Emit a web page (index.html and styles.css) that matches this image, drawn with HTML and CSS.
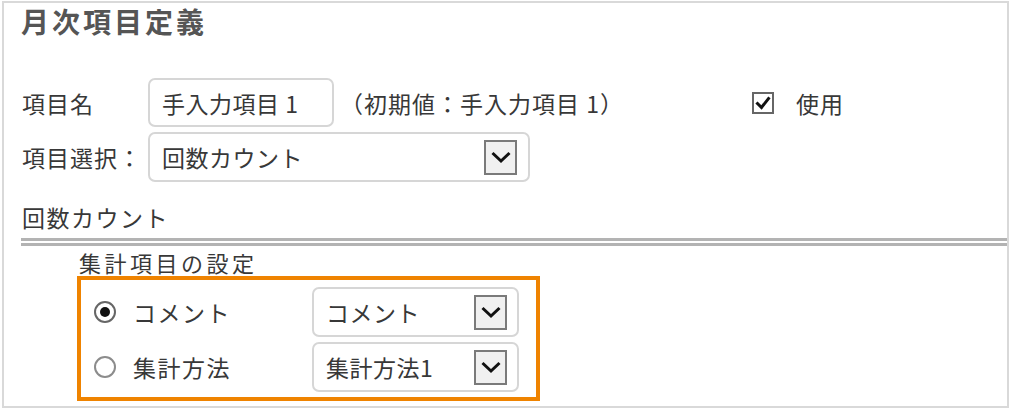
FILE: index.html
```html
<!DOCTYPE html>
<html lang="ja">
<head>
<meta charset="utf-8">
<title>月次項目定義</title>
<link rel="stylesheet" href="styles.css">
</head>
<body>
<div class="frame">
  <h1 class="title">月次項目定義</h1>
  <div class="row row-name">
    <span class="label">項目名</span>
    <div class="textbox">手入力項目 1</div>
    <span class="hint">（初期値：手入力項目 1）</span>
    <div class="use">
      <span class="checkbox"><svg width="18" height="18" viewBox="0 0 18 18"><path d="M3.5 9.5 L7.5 13.5 L14.5 4.5" fill="none" stroke="#111" stroke-width="3" stroke-linecap="square"/></svg></span>
      <span class="use-text">使用</span>
    </div>
  </div>
  <div class="row row-select">
    <span class="label">項目選択：</span>
    <div class="select select-wide">
      <span class="select-text">回数カウント</span>
      <span class="arrow"><svg width="22" height="16" viewBox="0 0 22 16"><path d="M2.5 4 L11 12 L19.5 4" fill="none" stroke="#111" stroke-width="3"/></svg></span>
    </div>
  </div>
  <div class="section">回数カウント</div>
  <div class="double-rule"></div>
  <div class="sub">
    <div class="subtitle">集計項目の設定</div>
    <div class="highlight">
      <div class="opt">
        <span class="radio checked"><span class="dot"></span></span>
        <span class="opt-label">コメント</span>
        <div class="select select-small">
          <span class="select-text">コメント</span>
          <span class="arrow"><svg width="22" height="16" viewBox="0 0 22 16"><path d="M2.5 4 L11 12 L19.5 4" fill="none" stroke="#111" stroke-width="3"/></svg></span>
        </div>
      </div>
      <div class="opt">
        <span class="radio"></span>
        <span class="opt-label">集計方法</span>
        <div class="select select-small">
          <span class="select-text">集計方法1</span>
          <span class="arrow"><svg width="22" height="16" viewBox="0 0 22 16"><path d="M2.5 4 L11 12 L19.5 4" fill="none" stroke="#111" stroke-width="3"/></svg></span>
        </div>
      </div>
    </div>
  </div>
</div>
</body>
</html>
```

FILE: styles.css
```css
html, body {
  margin: 0;
  padding: 0;
  background: #ffffff;
}
body {
  font-family: "Noto Sans CJK JP", "Noto Sans", sans-serif;
  color: #383838;
  font-size: 23px;
}
.frame {
  box-sizing: border-box;
  margin: 1px 0 0 2px;
  width: 1007px;
  height: 407px;
  border: 2px solid #d9d9d9;
  padding: 0 0 0 18px;
}
.title {
  margin: 0 0 0 -1px;
  height: 36px;
  font-size: 28px;
  line-height: 36px;
  font-weight: 700;
  letter-spacing: 3px;
  color: #555555;
}
.row {
  display: flex;
  align-items: center;
}
.row-name {
  margin-top: 39px;
  height: 49px;
}
.row-select {
  margin-top: 5px;
  height: 50px;
}
.label {
  width: 126px;
  flex: none;
  letter-spacing: 1px;
  line-height: 30px;
}
.textbox {
  box-sizing: border-box;
  width: 186px;
  height: 49px;
  border: 2px solid #d6d6d6;
  border-radius: 7px;
  padding-left: 12px;
  display: flex;
  align-items: center;
  letter-spacing: 0.5px;
}
.hint {
  margin-left: 6px;
  letter-spacing: 1px;
}
.use {
  display: flex;
  align-items: center;
  margin-left: 128px;
}
.checkbox {
  box-sizing: border-box;
  width: 22px;
  height: 22px;
  border: 2px solid #666666;
  display: flex;
  align-items: center;
  justify-content: center;
  background: #fff;
}
.use-text {
  margin-left: 22px;
  letter-spacing: 1px;
}
.select {
  box-sizing: border-box;
  height: 50px;
  border: 2px solid #d6d6d6;
  border-radius: 7px;
  display: flex;
  align-items: center;
  justify-content: space-between;
  padding-left: 12px;
}
.select-wide {
  width: 382px;
  padding-right: 11px;
}
.select-text {
  letter-spacing: 0.5px;
}
.arrow {
  box-sizing: border-box;
  width: 33px;
  height: 35px;
  border: 2px solid #7a7a7a;
  background: #f0f0f0;
  display: flex;
  align-items: center;
  justify-content: center;
}
.section {
  margin-top: 20px;
  line-height: 30px;
  letter-spacing: 1.5px;
}
.double-rule {
  margin-top: 6px;
  margin-left: -1px;
  height: 2px;
  border-top: 3px solid #b3b3b3;
  border-bottom: 3px solid #b3b3b3;
}
.sub {
  padding-left: 55px;
}
.subtitle {
  margin-top: 4px;
  font-size: 22px;
  line-height: 24px;
  letter-spacing: 3.5px;
  padding-left: 2px;
}
.highlight {
  box-sizing: border-box;
  margin-top: 2px;
  width: 463px;
  height: 125px;
  border: 4px solid #ef8300;
  padding: 7px 17px 5px 13px;
  display: flex;
  flex-direction: column;
  gap: 5px;
}
.opt {
  display: flex;
  align-items: center;
  height: 50px;
}
.radio {
  box-sizing: border-box;
  width: 22px;
  height: 22px;
  border-radius: 50%;
  border: 2px solid #8c8c8c;
  display: flex;
  align-items: center;
  justify-content: center;
  flex: none;
}
.radio.checked {
  border-color: #666666;
}
.dot {
  width: 10px;
  height: 10px;
  border-radius: 50%;
  background: #111;
}
.opt-label {
  margin-left: 17px;
  width: 158px;
  letter-spacing: 1.5px;
}
.select-small {
  width: 207px;
  padding-right: 10px;
  margin-left: auto;
}
```
